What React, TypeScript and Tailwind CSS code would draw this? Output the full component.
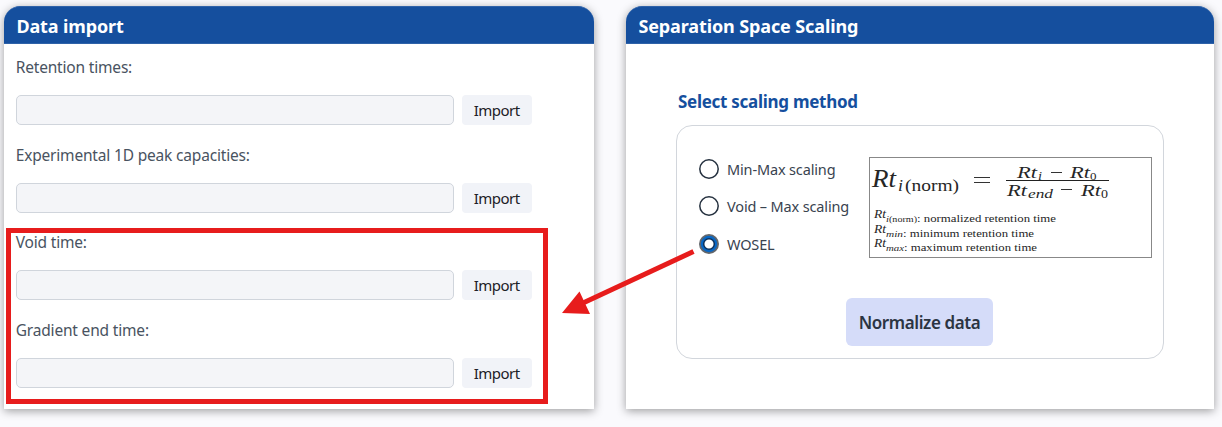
import React, { useState } from "react";

const fields = ["Retention times:", "Experimental 1D peak capacities:", "Void time:", "Gradient end time:"];

const methods = ["Min-Max scaling", "Void – Max scaling", "WOSEL"];

function Card({ title, width, children }: { title: string; width: string; children: React.ReactNode }) {
  return (
    <section
      className={`${width} flex h-[403px] flex-none flex-col rounded-t-[16px] bg-white shadow-[0_2px_10px_rgba(0,0,0,0.38)]`}
    >
      <h2 className="flex h-[38px] flex-none items-center rounded-t-[16px] border-y border-[#2f62a8] bg-[#154f9e] pt-[3px] pl-[12.4px] text-[18px] font-bold tracking-[-0.12px] text-white">
        {title}
      </h2>
      {children}
    </section>
  );
}

function Field({ label }: { label: string }) {
  return (
    <div className="h-[87.5px] flex-none">
      <div className="h-[38px] text-[15.5px] leading-[21px] tracking-[-0.18px] whitespace-nowrap text-[#495361]">
        {label}
      </div>
      <div className="flex gap-2">
        <input
          readOnly
          className="h-[30px] w-[438px] rounded-[5px] border border-[#d0d5dc] bg-[#f4f5f8] outline-none"
        />
        <button className="h-[30px] w-[70px] rounded-[4px] bg-[#f1f3f8] text-[15px] leading-[30px] tracking-[-0.55px] text-[#1c2026]">
          Import
        </button>
      </div>
    </div>
  );
}

function Radio({ label, checked, onSelect }: { label: string; checked: boolean; onSelect: () => void }) {
  return (
    <button
      role="radio"
      aria-checked={checked}
      onClick={onSelect}
      className="flex h-[37.5px] items-center gap-2 text-[14.5px] whitespace-nowrap text-[#39434f]"
    >
      <svg width="20" height="20" viewBox="0 0 20 20">
        {checked ? (
          <>
            <circle cx="10" cy="10" r="9.1" fill="#0867c4" stroke="#62666b" strokeWidth="1.8" />
            <circle cx="10" cy="10" r="5.3" fill="#fff" stroke="#0b315c" strokeWidth="1.5" />
          </>
        ) : (
          <circle cx="10" cy="10" r="9.2" fill="#fff" stroke="#25313f" strokeWidth="1.5" />
        )}
      </svg>
      <span className="pt-[1.5px] tracking-[-0.15px]">{label}</span>
    </button>
  );
}

type Glyphs = { x: number; y: number; w: number; size: number; italic?: boolean; text: string };

const formula: Glyphs[] = [
  { x: 3, y: 30, w: 24, size: 25, italic: true, text: "Rt" },
  { x: 29, y: 34, w: 5, size: 17, italic: true, text: "i" },
  { x: 36, y: 34, w: 54, size: 17, text: "(norm)" },
  { x: 148, y: 20.5, w: 20, size: 16.5, italic: true, text: "Rt" },
  { x: 169, y: 23, w: 4, size: 12, italic: true, text: "i" },
  { x: 201, y: 20.5, w: 20, size: 16.5, italic: true, text: "Rt" },
  { x: 221, y: 22.5, w: 6.5, size: 11, text: "0" },
  { x: 138, y: 39, w: 20, size: 16, italic: true, text: "Rt" },
  { x: 159, y: 41, w: 25, size: 12, italic: true, text: "end" },
  { x: 212, y: 39, w: 20, size: 16, italic: true, text: "Rt" },
  { x: 232, y: 41, w: 7, size: 12, text: "0" },
  { x: 5, y: 61, w: 12, size: 11.5, italic: true, text: "Rt" },
  { x: 17, y: 65, w: 3, size: 8.5, italic: true, text: "i" },
  { x: 20, y: 65, w: 28, size: 8.5, text: "(norm)" },
  { x: 48, y: 65, w: 139, size: 11, text: ": normalized retention time" },
  { x: 5, y: 76, w: 12, size: 11.5, italic: true, text: "Rt" },
  { x: 17, y: 80, w: 17, size: 8.5, italic: true, text: "min" },
  { x: 34, y: 80, w: 131, size: 11, text: ": minimum retention time" },
  { x: 5, y: 90, w: 12, size: 11.5, italic: true, text: "Rt" },
  { x: 17, y: 94, w: 18, size: 8.5, italic: true, text: "max" },
  { x: 35, y: 94, w: 133, size: 11, text: ": maximum retention time" },
];

function Formula() {
  return (
    <svg
      width="283"
      height="101"
      viewBox="0 0 283 101"
      fill="#262626"
      className="font-['Liberation_Serif',serif]"
    >
      <rect x="0.5" y="0.5" width="282" height="100" fill="#fff" stroke="#888" />
      {formula.map((g, i) => (
        <text
          key={i}
          x={g.x}
          y={g.y}
          fontSize={g.size}
          fontStyle={g.italic ? "italic" : "normal"}
          textLength={g.w}
          lengthAdjust="spacingAndGlyphs"
        >
          {g.text}
        </text>
      ))}
      <path d="M105 20.5h16M105 25.5h16M182 15.5h11M192 32.5h11" stroke="#333" />
      <path d="M137 23.5h103" stroke="#222" strokeWidth="1.1" />
    </svg>
  );
}

export default function App() {
  const [method, setMethod] = useState(2);
  return (
    <main className="relative flex h-[427px] w-[1222px] gap-8 overflow-hidden bg-[#fafafd] pt-[6px] pl-1 font-['Noto_Sans',sans-serif]">
      <Card title="Data import" width="w-[590px]">
        <div className="flex flex-col pt-[13.2px] pl-[11.7px]">
          {fields.map((label) => (
            <Field key={label} label={label} />
          ))}
        </div>
      </Card>
      <Card title="Separation Space Scaling" width="w-[588px]">
        <div className="pt-[45px] pl-[50px]">
          <h3 className="h-[36px] pl-[2px] text-[17px] leading-[26px] font-bold tracking-[-0.28px] text-[#154f9e]">
            Select scaling method
          </h3>
          <div className="flex h-[234px] w-[488px] flex-col rounded-[16px] border border-[#d2d6dc]">
            <div className="flex h-[172px] pt-[24px] pl-[22px]">
              <div role="radiogroup" className="w-[170px]">
                {methods.map((m, i) => (
                  <Radio key={m} label={m} checked={method === i} onSelect={() => setMethod(i)} />
                ))}
              </div>
              <div className="pt-[7px]">
                <Formula />
              </div>
            </div>
            <button className="ml-[169px] h-12 w-[147px] rounded-[6px] bg-[#d5dcf9] pt-[2px] text-[17px] font-semibold tracking-[-0.4px] whitespace-nowrap text-[#2b3442]">
              Normalize data
            </button>
          </div>
        </div>
      </Card>
      <svg className="pointer-events-none absolute top-0 left-0" width="1222" height="427" viewBox="0 0 1222 427">
        <rect x="8.5" y="230.5" width="537" height="171" fill="none" stroke="#e71c1c" strokeWidth="5" />
        <path d="M693.5 251.5L583 303" stroke="#e71c1c" strokeWidth="5" />
        <path d="M562 313L579.5 291.5L590 314Z" fill="#e71c1c" />
      </svg>
    </main>
  );
}
